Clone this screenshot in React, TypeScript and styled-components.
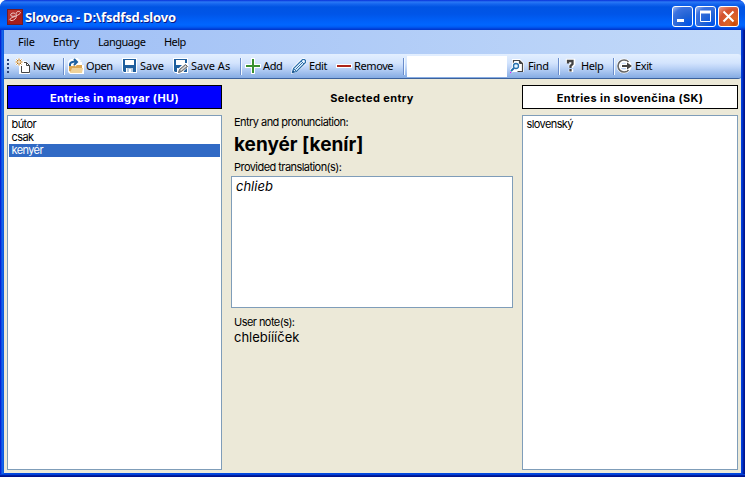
import React from "react";
import styled, { createGlobalStyle } from "styled-components";

const GlobalStyle = createGlobalStyle`
  * { box-sizing: border-box; }
  body { margin: 0; background: #fff; overflow: hidden; }
`;

const Window = styled.div`
  width: 745px;
  height: 477px;
  display: flex;
  flex-direction: column;
  border-radius: 7px 7px 0 0;
  overflow: hidden;
  background: #0048e0;
  color: #000;
  font: 11px/13px "Noto Sans", sans-serif;
  cursor: default;
`;

const TitleBar = styled.header`
  height: 30px;
  flex: none;
  display: flex;
  align-items: center;
  padding: 3px 6px 0 7px;
  background: linear-gradient(
    to bottom,
    #0831d9 0, #2a78f5 2px, #1565ee 4px, #0054e3 7px,
    #0055e8 14px, #0062fb 22px, #0066ff 25px, #005bf3 27px, #003dd7 29px, #0035c5 30px
  );
`;

const Title = styled.h1`
  margin: 0 auto 0 2px;
  color: #fff;
  font: bold 13px/18px "Noto Sans", sans-serif;
  letter-spacing: -0.18px;
  text-shadow: 1px 1px 0 #0a1883;
  white-space: pre;
`;

const Controls = styled.div`
  display: flex;
  gap: 2px;
`;

const Control = styled.button<{ $close?: boolean }>`
  width: 21px;
  height: 21px;
  padding: 0;
  border: 1px solid #fff;
  border-radius: 3px;
  display: flex;
  background: ${({ $close }) =>
    $close
      ? "radial-gradient(circle at 80% 90%, #cc4600 0%, #dc6527 25%, #d4512e 65%, #f0a08a 100%)"
      : "radial-gradient(circle at 85% 90%, #0054e9 0%, #2263d5 40%, #3c72e0 75%, #a3bbec 100%)"};
`;

const Frame = styled.div`
  flex: 1;
  display: flex;
  flex-direction: column;
  min-height: 0;
  padding: 0 4px 4px;
  background: linear-gradient(to right, #0019cf 0, #0831d9 1px, #166aee 2px, #0855dd 4px, #0048e0 5px, #0048e0 740px, #003ddc 742px, #001590 744px);
  box-shadow: inset 0 -1px #00138c, inset 0 -2px #001ea0, inset 0 -3px #0441d8;
`;

const MenuBar = styled.nav`
  height: 24px;
  flex: none;
  display: flex;
  align-items: center;
  padding: 0 0 2px 14px;
  background: linear-gradient(to right, #9ebef5, #c3daf9);
`;

const MenuItem = styled.span<{ $w: number; $ls?: number }>`
  width: ${({ $w }) => $w}px;
  letter-spacing: ${({ $ls = -0.25 }) => $ls}px;
`;

const ToolRow = styled.div`
  height: 25px;
  flex: none;
  background: linear-gradient(to right, #9ebef5, #c3daf9);
`;

const ToolBar = styled.div`
  height: 25px;
  display: flex;
  align-items: center;
  padding-left: 3px;
  border-bottom: 1px solid #3b619c;
  border-radius: 0 3px 3px 0;
  background: linear-gradient(to bottom, #e3efff 0, #d3e4fd 9px, #c0d6f8 13px, #84abe3 24px);
`;

const Grip = styled.i`
  width: 3px;
  height: 15px;
  background: repeating-linear-gradient(to bottom, #27417b 0 2px, transparent 2px 4px) 0 0 / 2px 15px no-repeat;
  margin-right: 5px;
`;

const Tool = styled.button<{ $w: number; $gap?: number; $ls?: number }>`
  width: ${({ $w }) => $w}px;
  height: 24px;
  flex: none;
  display: flex;
  align-items: center;
  gap: ${({ $gap = 2 }) => $gap}px;
  padding: 0 0 1px;
  border: 0;
  background: none;
  color: #000;
  font: 11px/13px "Noto Sans", sans-serif;
  letter-spacing: ${({ $ls = -0.4 }) => $ls}px;
  white-space: nowrap;
  svg { flex: none; }
`;

const ToolLabel = styled.span`
  padding-bottom: 1px;
`;

const Separator = styled.i<{ $after?: number }>`
  width: 2px;
  height: 17px;
  flex: none;
  border-left: 1px solid #6a8ccb;
  border-right: 1px solid #f1f9ff;
  margin-right: ${({ $after = 3 }) => $after}px;
`;

const SearchInput = styled.input`
  width: 100px;
  height: 21px;
  flex: none;
  margin: 0 3px 0 0;
  padding: 2px;
  border: 0;
  outline: 0;
  background: #fff;
`;

const Content = styled.main`
  flex: 1;
  min-height: 0;
  display: grid;
  grid-template-columns: 215px 282px 216px;
  column-gap: 9px;
  padding: 6px 3px 3px;
  background: #ece9d8;
  font-family: "Inter", sans-serif;
`;

const Column = styled.section`
  display: flex;
  flex-direction: column;
  min-height: 0;
`;

const Heading = styled.h2<{ $kind: "active" | "plain" | "bare" }>`
  margin: 0;
  height: 24px;
  flex: none;
  text-align: center;
  font: bold 11px/24px "Inter", sans-serif;
  letter-spacing: 0.37px;
  border: 1px solid ${({ $kind }) => ($kind === "bare" ? "transparent" : "#000")};
  background: ${({ $kind }) => ({ active: "#0000ff", plain: "#fff", bare: "none" })[$kind]};
  color: ${({ $kind }) => ($kind === "active" ? "#fff" : "#000")};
`;

const ListBox = styled.ul`
  flex: 1;
  margin: 6px 0 0;
  padding: 2px 1px;
  list-style: none;
  border: 1px solid #7f9db9;
  background: #fff;
`;

const Entry = styled.li<{ $selected?: boolean }>`
  height: 13px;
  line-height: 12px;
  padding-left: 2.5px;
  letter-spacing: -0.6px;
  background: ${({ $selected }) => ($selected ? "#316ac5" : "transparent")};
  color: ${({ $selected }) => ($selected ? "#fff" : "#000")};
`;

const Caption = styled.div<{ $top: number; $ls?: number }>`
  margin: ${({ $top }) => $top}px 0 0 3px;
  height: 13px;
  letter-spacing: ${({ $ls = -0.55 }) => $ls}px;
`;

const Headword = styled.div`
  margin: 5px 0 0 3px;
  font: bold 19px/22px "Inter", sans-serif;
`;

const Translation = styled.div`
  margin-top: 2px;
  height: 132px;
  flex: none;
  padding: 1px 4px;
  border: 1px solid #7f9db9;
  background: #fff;
  font: italic 13px/16px "Inter", sans-serif;
`;

const Note = styled.div`
  margin-left: 3px;
  font-size: 13px;
  line-height: 16px;
`;

const Icon = ({ children, w = 16 }: { children: React.ReactNode; w?: number }) => (
  <svg width={w} height="16" viewBox={`0 0 ${w} 16`} fill="none">{children}</svg>
);

const LogoIcon = () => (
  <Icon>
    <rect x=".5" y=".5" width="15" height="15" fill="#a51d1c" stroke="#741b25" />
    <path d="M1 1h14L1 13Z" fill="#c64540" opacity=".5" />
    <path d="M13.500 3.500C12 1.500 9 2.500 9 5s1 3-1 5-5 2-5 .5 3-2 6-3.500 4-2 4.500-3.500M8 7C5 8 2.500 6.500 4 5s3-1 4-.5" stroke="#f3dada" strokeWidth=".9" />
  </Icon>
);

const NewIcon = () => (
  <Icon>
    <path d="M5 3h6l4 4v9H4V6Z" fill="#fff" />
    <path d="M6.500 8v6.500h8V7.500l-3-3H9M11.500 4.500v3h3" stroke="#444" />
    <path d="M4 0v8M0 4h8M1 1l6 6M7 1 1 7" stroke="#fff" strokeWidth="2" />
    <path d="M4 .5v7M.5 4h7M1.500 1.500l5 5M6.500 1.500l-5 5" stroke="#b87516" />
    <circle cx="4" cy="4" r="1" fill="#fff" />
  </Icon>
);

const OpenIcon = () => (
  <Icon>
    <path d="M0 6h6l2-2h6v3h2v9H2l-2-2Z" fill="#fff" />
    <path d="M1 8h4l1-1h8v7H3l-2-1Z" fill="#dca653" />
    <path d="M4 10h11l-1 5H2Z" fill="#efd29a" />
    <path d="M2 8V4.500C3 2.500 5 2.500 8 3M6 0l4 3-4 4" stroke="#fff" strokeWidth="4" />
    <path d="M2 8C1.500 4 4 3.500 8 4M6 1l3 3-3 3" stroke="#1d60a1" strokeWidth="2" />
  </Icon>
);

const Floppy = () => (
  <>
    <path d="M0 0h15v15H2l-2-2Z" fill="#fff" />
    <path d="M1 1h13v13H2l-1-1Z" fill="#1e5e9d" />
    <path d="M3 2h9v5H3ZM4 10h7v4H4Z" fill="#fff" />
    <path d="M5 10h6v4H9v-3H7v3H5Z" fill="#b9cee2" />
  </>
);
const SaveIcon = () => <Icon><Floppy /></Icon>;
const SaveAsIcon = () => (
  <Icon>
    <Floppy />
    <path d="m4 16 1-5 6-6h3l2 2-1 2-6 6-4 1Z" fill="#fff" />
    <path d="m5.500 14.500 1-3 6-5 2 2-6 5Z" fill="#aaa" stroke="#666" />
    <path d="m8 12 5-4" stroke="#eee" />
  </Icon>
);

const AddIcon = () => (
  <Icon>
    <path d="M8 0v16M0 8h16" stroke="#fff" strokeWidth="4" />
    <path d="M8 1v14M1 8h14" stroke="#39902f" strokeWidth="2" />
  </Icon>
);

const EditIcon = () => (
  <Icon>
    <path d="m0 16 1-6L10 1l3-1 3 3-1 3-9 8Z" fill="#fff" />
    <path d="m1.500 14.500 1-4 9-9h2l1 1v2l-9 9Z" fill="#e5f4ff" stroke="#2a6eaa" strokeWidth="1.200" />
    <path d="m4.500 11.500 7-7M2.500 10.500l3 3M10 3l3 3" stroke="#2a6eaa" />
    <path d="m1 15 1-3 2 2Z" fill="#1d5389" />
  </Icon>
);

const RemoveIcon = () => (
  <Icon>
    <path d="M0 8h16" stroke="#fff" strokeWidth="4" />
    <path d="M1 8h14" stroke="#ad2418" strokeWidth="2" />
  </Icon>
);

const FindIcon = () => (
  <Icon>
    <path d="M2 1h8l4 4v9H2Z" fill="#fff" />
    <path d="M3.500 6V2.500h6l3 3v8h-5M9.500 2.500v3h3" stroke="#444" strokeWidth="1.200" />
    <circle cx="6" cy="8" r="2.700" fill="#e3f4ff" stroke="#fff" strokeWidth="3" />
    <path d="m4 10-3 3" stroke="#fff" strokeWidth="4" />
    <circle cx="6" cy="8" r="2.500" fill="#e3f4ff" stroke="#2670ae" strokeWidth="1.300" />
    <path d="m4 10-3 3" stroke="#2670ae" strokeWidth="2" />
    <path d="M0 14h1v1H0Z" fill="#f0f" />
  </Icon>
);

const HelpIcon = () => (
  <Icon w={12}>
    <path d="M3 5V3h5v3L6 8v2M6 11v3" stroke="#fff" strokeWidth="4.500" />
    <path d="M3 5.500V3h4.500v3L5.500 8v2M5.500 11v2.500" stroke="#444" strokeWidth="2.300" />
  </Icon>
);

const ExitIcon = () => (
  <Icon>
    <circle cx="7" cy="8" r="5.500" stroke="#fff" strokeWidth="4" />
    <path d="M11.500 4a6 6 0 1 0 0 8" stroke="#666" strokeWidth="1.600" />
    <path d="M4 6h5V3l7 5-7 5v-3H4Z" fill="#fff" />
    <path d="M5 7h5V4.500L15 8l-5 3.500V9H5Z" fill="#444" />
  </Icon>
);

const Glyph = ({ d, wide }: { d: string; wide?: boolean }) => (
  <svg width="19" height="19" viewBox="0 0 19 19" fill="none">
    <path d={d} stroke="#fff" strokeWidth={wide ? 3 : 2} />
  </svg>
);

export default function App() {
  return (
    <Window>
      <GlobalStyle />
      <TitleBar>
        <LogoIcon />
        <Title>Slovoca - D:\fsdfsd.slovo</Title>
        <Controls>
          <Control aria-label="Minimize"><Glyph d="M4 13.500h7" wide /></Control>
          <Control aria-label="Maximize">
            <svg width="19" height="19" viewBox="0 0 19 19" fill="none">
              <path d="M4.500 4v10.500h10V4" stroke="#fff" />
              <path d="M4 5h11" stroke="#fff" strokeWidth="3" />
            </svg>
          </Control>
          <Control $close aria-label="Close"><Glyph d="m4.500 4.500 10 10M14.500 4.500l-10 10" /></Control>
        </Controls>
      </TitleBar>
      <Frame>
        <MenuBar>
          <MenuItem $w={35}>File</MenuItem>
          <MenuItem $w={45}>Entry</MenuItem>
          <MenuItem $w={66} $ls={-0.5}>Language</MenuItem>
          <MenuItem $w={40} $ls={-0.6}>Help</MenuItem>
        </MenuBar>
        <ToolRow>
          <ToolBar>
            <Grip />
            <Tool $w={48} $ls={-0.7}><NewIcon /><ToolLabel>New</ToolLabel></Tool>
            <Separator />
            <Tool $w={54}><OpenIcon /><ToolLabel>Open</ToolLabel></Tool>
            <Tool $w={51} $ls={0}><SaveIcon /><ToolLabel>Save</ToolLabel></Tool>
            <Tool $w={67} $ls={0}><SaveAsIcon /><ToolLabel>Save As</ToolLabel></Tool>
            <Separator />
            <Tool $w={46}><AddIcon /><ToolLabel>Add</ToolLabel></Tool>
            <Tool $w={45}><EditIcon /><ToolLabel>Edit</ToolLabel></Tool>
            <Tool $w={67}><RemoveIcon /><ToolLabel>Remove</ToolLabel></Tool>
            <Separator $after={2} />
            <SearchInput aria-label="Search" />
            <Tool $w={48}><FindIcon /><ToolLabel>Find</ToolLabel></Tool>
            <Separator $after={5} />
            <Tool $w={48} $gap={4}><HelpIcon /><ToolLabel>Help</ToolLabel></Tool>
            <Separator $after={2} />
            <Tool $w={44}><ExitIcon /><ToolLabel>Exit</ToolLabel></Tool>
          </ToolBar>
        </ToolRow>
        <Content>
          <Column>
            <Heading $kind="active">Entries in magyar (HU)</Heading>
            <ListBox>
              <Entry>bútor</Entry>
              <Entry>csak</Entry>
              <Entry $selected>kenyér</Entry>
            </ListBox>
          </Column>
          <Column>
            <Heading $kind="bare">Selected entry</Heading>
            <Caption $top={7}>Entry and pronunciation:</Caption>
            <Headword>kenyér [kenír]</Headword>
            <Caption $top={5}>Provided translation(s):</Caption>
            <Translation>chlieb</Translation>
            <Caption $top={8}>User note(s):</Caption>
            <Note>chlebíííček</Note>
          </Column>
          <Column>
            <Heading $kind="plain">Entries in slovenčina (SK)</Heading>
            <ListBox>
              <Entry>slovenský</Entry>
            </ListBox>
          </Column>
        </Content>
      </Frame>
    </Window>
  );
}
